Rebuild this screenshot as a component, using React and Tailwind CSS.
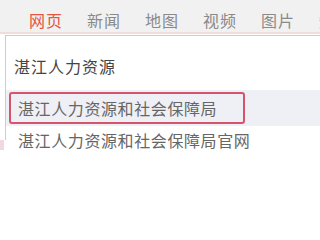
export default function App() {
  const tabs = ["网页", "新闻", "地图", "视频", "图片", "知"];
  return (
    <div
      className="relative w-[320px] h-[240px] overflow-hidden bg-white"
      style={{ fontFamily: '"Noto Sans CJK SC", "Noto Sans", sans-serif' }}
    >
      <div className="h-[32px] bg-[#f1f1f1] flex pl-[29px] pt-[11px]">
        {tabs.map((t, i) => (
          <div
            key={t}
            className={
              "shrink-0 w-[58px] text-[16px] leading-[18px] tracking-[1px] " +
              (i === 0 ? "text-[#e5553f]" : "text-[#8a8a8a]")
            }
          >
            {t}
          </div>
        ))}
      </div>
      <div className="h-[2px] bg-[#f3dcdc]" />
      <div className="h-[1px] bg-white" />
      <div className="ml-[5px] border-l border-t border-[#cdcdcd] h-[105px]">
        <div className="h-[54px] pl-[8px] pt-[20px] text-[16px] leading-[20px] tracking-[1px] text-[#444]">
          湛江人力资源
        </div>
        <div className="h-[36px] bg-[#eef0f5] pt-[2px] pl-[3px]">
          <div className="w-[236px] h-[32px] border-2 border-[#d6546b] rounded-[3px] pl-[7px] flex items-center text-[16px] tracking-[0.6px] text-[#666]">
            湛江人力资源和社会保障局
          </div>
        </div>
        <div className="pl-[12px] pt-[4px] text-[16px] leading-[20px] tracking-[0.6px] text-[#666] whitespace-nowrap">
          湛江人力资源和社会保障局官网
        </div>
      </div>
      <div className="absolute left-0 top-[140px] w-[4px] h-[10px] bg-[#f0d8dc]" />
    </div>
  );
}
